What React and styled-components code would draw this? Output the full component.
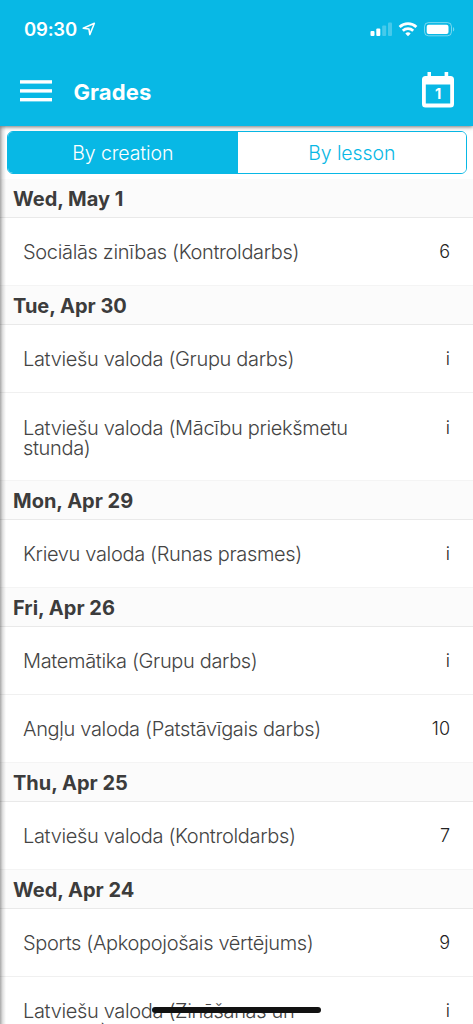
import React, { useState } from 'react'
import styled, { createGlobalStyle } from 'styled-components'

const days = [
  { title: 'Wed, May 1', grades: [['Sociālās zinības (Kontroldarbs)', '6']] },
  {
    title: 'Tue, Apr 30',
    grades: [
      ['Latviešu valoda (Grupu darbs)', 'i'],
      ['Latviešu valoda (Mācību priekšmetu stunda)', 'i'],
    ],
  },
  { title: 'Mon, Apr 29', grades: [['Krievu valoda (Runas prasmes)', 'i']] },
  {
    title: 'Fri, Apr 26',
    grades: [
      ['Matemātika (Grupu darbs)', 'i'],
      ['Angļu valoda (Patstāvīgais darbs)', '10'],
    ],
  },
  { title: 'Thu, Apr 25', grades: [['Latviešu valoda (Kontroldarbs)', '7']] },
  {
    title: 'Wed, Apr 24',
    grades: [
      ['Sports (Apkopojošais vērtējums)', '9'],
      ['Latviešu valoda (Zināšanas un prasmes)', 'i'],
    ],
  },
]

function App() {
  const [tab, setTab] = useState('creation')

  return (
    <Screen>
      <GlobalStyle />
      <Header>
        <StatusBar>
          <Clock>09:30</Clock>
          <LocationIcon viewBox="0 0 14 14">
            <path d="M1.2 6.3 12.4 1.2 7.8 12.6 6.9 6.9Z" />
          </LocationIcon>
          <StatusIcons />
        </StatusBar>
        <NavBar>
          <IconButton aria-label="Menu">
            <svg width="32" height="22" viewBox="0 0 32 22" fill="#fff">
              <rect y="0.2" width="32" height="3.4" />
              <rect y="9.2" width="32" height="3.4" />
              <rect y="18" width="32" height="3.4" />
            </svg>
          </IconButton>
          <Title>Grades</Title>
          <IconButton aria-label="Calendar">
            <CalendarIcon width="32" height="36" viewBox="0 0 32 36">
              <path
                fillRule="evenodd"
                d="M5.5 0H9V4H22.6V0H26.2V4H28.5Q32 4 32 7.5V32Q32 35.5 28.5 35.5H3.5Q0 35.5 0 32V7.5Q0 4 3.5 4H5.5ZM3.8 12.6V31.5H28.2V12.6Z"
              />
              <text x="16.2" y="27.4" textAnchor="middle">1</text>
            </CalendarIcon>
          </IconButton>
        </NavBar>
      </Header>

      <Content>
        <Tabs>
          <Tab $active={tab === 'creation'} onClick={() => setTab('creation')}>By creation</Tab>
          <Tab $active={tab === 'lesson'} onClick={() => setTab('lesson')}>By lesson</Tab>
        </Tabs>
        {days.map((day) => (
          <section key={day.title}>
            <DayTitle>{day.title}</DayTitle>
            {day.grades.map(([lesson, grade]) => (
              <Row key={lesson}>
                <Lesson>{lesson}</Lesson>
                <Grade>{grade}</Grade>
              </Row>
            ))}
          </section>
        ))}
      </Content>
      <EdgeShadow />
      <HomeIndicator />
    </Screen>
  )
}

function StatusIcons() {
  return (
    <StatusSvg viewBox="0 0 86 16">
      <rect x="0.5" y="10" width="4" height="5" rx="1" />
      <rect x="6.3" y="7.5" width="4" height="7.5" rx="1" />
      <rect x="12.2" y="4.5" width="4" height="10.5" rx="1" opacity="0.25" />
      <rect x="18" y="1.5" width="4" height="13.5" rx="1" opacity="0.25" />
      <g fill="none" stroke="#fff" strokeWidth="2.8">
        <path d="M29.6 6a12.4 12.4 0 0 1 16.8 0" />
        <path d="M32.8 9.7a7.7 7.7 0 0 1 10.4 0" />
      </g>
      <path d="M38 15.2l-2.7-2.7a4 4 0 0 1 5.4 0z" />
      <rect x="54.5" y="1.6" width="27" height="13.2" rx="4" fill="none" stroke="#fff" opacity="0.45" />
      <rect x="56.7" y="3.7" width="21.8" height="9.2" rx="2" />
      <path d="M83 6v4.6c1.7-.8 1.7-3.8 0-4.6z" opacity="0.45" />
    </StatusSvg>
  )
}

export default App

const GlobalStyle = createGlobalStyle`
  body {
    margin: 0;
    overflow: hidden;
    font-family: Inter, Roboto, sans-serif;
  }
  * {
    box-sizing: border-box;
  }
`

const Screen = styled.div`
  position: relative;
  display: flex;
  flex-direction: column;
  width: 473px;
  height: 1024px;
  overflow: hidden;
  background: #fff;
`

const Header = styled.header`
  position: relative;
  z-index: 3;
  flex: none;
  height: 126px;
  color: #fff;
  background: #08b8e5;
  box-shadow: 0 1px 4px rgba(0, 0, 0, 0.55);
`

const StatusBar = styled.div`
  display: flex;
  align-items: center;
  height: 58px;
  padding: 0 17px 0 24px;
`

const Clock = styled.span`
  font-size: 18.5px;
  font-weight: 600;
  letter-spacing: -0.2px;
`

const LocationIcon = styled.svg`
  width: 14px;
  height: 14px;
  margin-left: 5px;
  fill: none;
  stroke: #fff;
  stroke-width: 1.5;
  stroke-linejoin: round;
`

const StatusSvg = styled.svg`
  width: 86px;
  height: 16px;
  margin-left: auto;
  fill: #fff;
`

const NavBar = styled.nav`
  display: flex;
  align-items: center;
  height: 66px;
  padding: 0 19.5px;
`

const IconButton = styled.button`
  display: flex;
  padding: 0;
  border: 0;
  background: none;
`

const Title = styled.h1`
  margin: 1px auto 0 22px;
  font-size: 22px;
  font-weight: 700;
  letter-spacing: 0.1px;
`

const CalendarIcon = styled.svg`
  margin-bottom: 3px;
  fill: #fff;
  font: 700 14.5px Inter, sans-serif;
`

const Content = styled.main`
  flex: 1;
  min-height: 0;
  overflow: hidden;
`

const Tabs = styled.div`
  display: flex;
  height: 43px;
  margin: 5px 6.5px 4px;
  border: 1px solid #08b8e5;
  border-radius: 6px;
  overflow: hidden;
`

const Tab = styled.button`
  flex: 1;
  padding: 0;
  border: 0;
  font: 300 19.5px Inter, sans-serif;
  letter-spacing: -0.1px;
  color: ${props => props.$active ? '#fff' : '#08b8e5'};
  background: ${props => props.$active ? '#08b8e5' : '#fff'};

  &:first-child {
    flex: 0 0 230.5px;
  }
`

const DayTitle = styled.h2`
  height: 40px;
  margin: 0;
  padding-left: 13px;
  border-top: 1px solid #f4f4f4;
  border-bottom: 1px solid #e9e9e9;
  background: #fbfbfb;
  color: #3c3c3c;
  font-size: 20px;
  font-weight: 700;
  line-height: 40px;
  letter-spacing: 0;

  section:first-of-type > & {
    border-top-color: #fff;
  }
`

const Row = styled.div`
  display: flex;
  justify-content: space-between;
  padding: 24.25px 23px 22.9px;
  line-height: 20px;

  & + & {
    border-top: 1px solid #f0f0f0;
  }

  /* the divider is part of the row height */
  &:last-child:not(h2 + &) {
    padding-bottom: 22.4px;
  }
`

const Lesson = styled.span`
  width: 340px;
  color: #444;
  font-size: 20px;
  font-weight: 300;
  letter-spacing: -0.34px;
`

const Grade = styled.span`
  color: #222;
  font-size: 18px;
  font-weight: 350;
`

const EdgeShadow = styled.div`
  position: absolute;
  top: 126px;
  bottom: 0;
  left: 0;
  z-index: 2;
  width: 6px;
  background: linear-gradient(to right, rgba(0, 0, 0, 0.34), rgba(0, 0, 0, 0.12) 45%, transparent);
`

const HomeIndicator = styled.div`
  position: absolute;
  left: 152px;
  bottom: 11px;
  z-index: 4;
  width: 169px;
  height: 6px;
  border-radius: 3px;
  background: #111;
`
